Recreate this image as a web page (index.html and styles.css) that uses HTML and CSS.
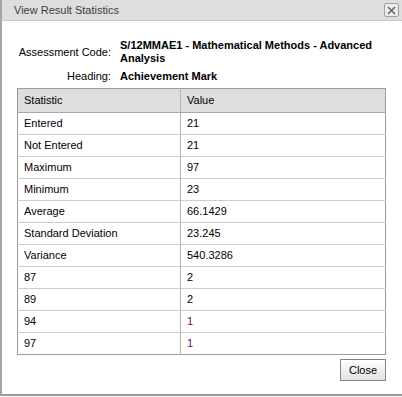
FILE: index.html
```html
<!DOCTYPE html>
<html>
<head>
<meta charset="utf-8">
<link rel="stylesheet" href="styles.css">
</head>
<body>
<div class="dialog">
  <div class="titlebar">
    <span class="title">View Result Statistics</span>
    <span class="close-x">
      <svg width="9" height="9" viewBox="0 0 9 9"><path d="M1 1 L8 8 M8 1 L1 8" stroke="#666" stroke-width="1.6" fill="none"/></svg>
    </span>
  </div>
  <div class="content">
    <div class="info">
      <div class="label">Assessment Code:</div>
      <div class="value">S/12MMAE1 - Mathematical Methods - Advanced Analysis</div>
      <div class="label">Heading:</div>
      <div class="value">Achievement Mark</div>
    </div>
    <table class="stats">
      <thead>
        <tr><th class="c1">Statistic</th><th class="c2">Value</th></tr>
      </thead>
      <tbody>
        <tr><td class="c1">Entered</td><td class="c2">21</td></tr>
        <tr><td class="c1">Not Entered</td><td class="c2">21</td></tr>
        <tr><td class="c1">Maximum</td><td class="c2">97</td></tr>
        <tr><td class="c1">Minimum</td><td class="c2">23</td></tr>
        <tr><td class="c1">Average</td><td class="c2">66.1429</td></tr>
        <tr><td class="c1">Standard Deviation</td><td class="c2">23.245</td></tr>
        <tr><td class="c1">Variance</td><td class="c2">540.3286</td></tr>
        <tr><td class="c1">87</td><td class="c2">2</td></tr>
        <tr><td class="c1">89</td><td class="c2">2</td></tr>
        <tr><td class="c1">94</td><td class="c2 one">1</td></tr>
        <tr><td class="c1">97</td><td class="c2 one">1</td></tr>
      </tbody>
    </table>
    <div class="actions">
      <button class="btn">Close</button>
    </div>
  </div>
</div>
</body>
</html>
```
FILE: styles.css
```css
html, body {
  margin: 0;
  padding: 0;
  background: #fff;
}
body {
  width: 402px;
  height: 397px;
  overflow: hidden;
  font-family: "Liberation Sans", Arial, sans-serif;
  font-size: 11px;
  color: #000;
}
.dialog {
  width: 400px;
  height: 394px;
  border-left: 2px solid #a4a4a4;
  border-bottom: 2px solid #9a9a9a;
  background: #fff;
  display: flex;
  flex-direction: column;
}
.titlebar {
  height: 20px;
  background: #dedede;
  border-bottom: 1px solid #c9c9c9;
  display: flex;
  align-items: center;
  justify-content: space-between;
  padding: 0 3px 0 12px;
}
.title {
  color: #3c3c3c;
  font-size: 11px;
}
.close-x {
  width: 13px;
  height: 12px;
  border: 1px solid #a0a0a0;
  border-radius: 2px;
  background: #ececec;
  display: flex;
  align-items: center;
  justify-content: center;
}
.content {
  padding: 18px 0 0 15px;
}
.info {
  display: grid;
  grid-template-columns: 94px 264px;
  column-gap: 9px;
  row-gap: 5px;
  align-items: center;
  line-height: 13px;
}
.label {
  text-align: right;
  color: #000;
}
.value {
  font-weight: bold;
  color: #000;
}
.stats {
  margin-top: 5px;
  width: 369px;
  border-collapse: collapse;
  border: 1px solid #9c9c9c;
}
.stats th, .stats td {
  text-align: left;
  font-weight: normal;
  padding: 0 0 0 6px;
  line-height: 13px;
}
.stats th {
  background: #dedede;
  height: 23px;
  border-bottom: 1px solid #a8a8a8;
}
.stats td {
  height: 21px;
  border-top: 1px solid #cdcdcd;
}
.stats .c1 {
  width: 156px;
}
.stats .c2 {
  border-left: 1px solid #b4b4b4;
}
.stats .one {
  color: #6e0a64;
}
.actions {
  display: flex;
  justify-content: flex-end;
  width: 369px;
  margin-top: 4px;
}
.btn {
  width: 46px;
  height: 22px;
  padding: 0;
  border: 1px solid #858585;
  border-radius: 0;
  background: linear-gradient(#ffffff, #f2f2f2 45%, #e2e2e2);
  font-family: "Liberation Sans", Arial, sans-serif;
  font-size: 11px;
  color: #000;
}
```
